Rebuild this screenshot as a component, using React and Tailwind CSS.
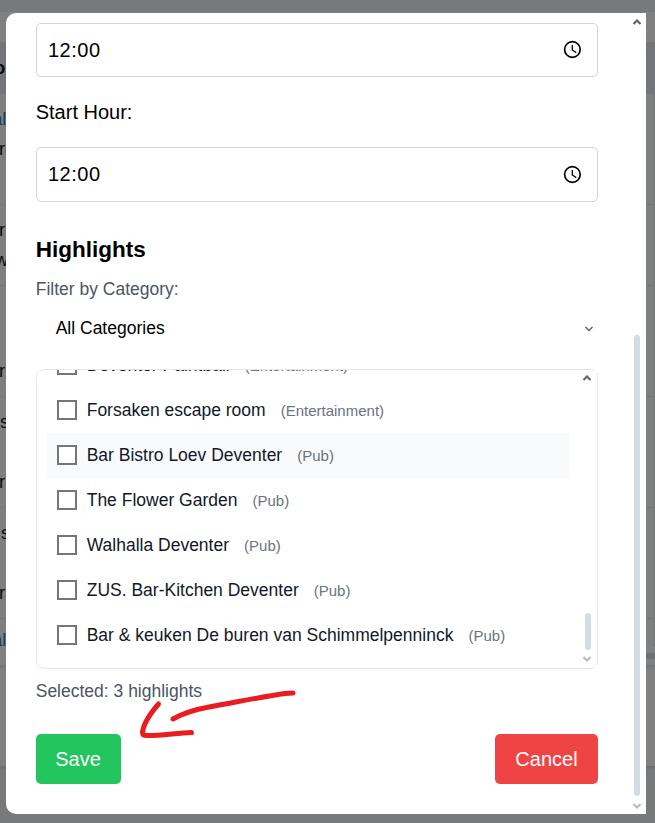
import React from "react";

const arial = "font-['Liberation_Sans',Arial,sans-serif]";

function Clock({ className }) {
  return (
    <svg width="20" height="20" viewBox="0 0 20 20" fill="none" stroke="#000" className={className}>
      <circle cx="10.400" cy="9.500" r="7.800" strokeWidth="1.700" />
      <path d="M10.300 5v5l4 2.600" strokeWidth="1.300" />
    </svg>
  );
}

function Chevron({ up, className, width = 1.8 }) {
  return (
    <svg width="10" height="6" viewBox="0 0 10 6" fill="none" stroke="currentColor" strokeWidth={width} className={className}>
      <path d={up ? "M1.500 5 5 1.500 8.500 5" : "M1.500 1 5 4.500 8.500 1"} />
    </svg>
  );
}

function TimeField({ className, iconClass }) {
  return (
    <div className={`flex items-center justify-between rounded-[5px] border border-[#d1d5db] pl-[11px] pr-[15px] ${className}`}>
      <span className="text-[20px] leading-[30px] tracking-[0.5px]">12:00</span>
      <Clock className={iconClass} />
    </div>
  );
}

const places = [
  ["Deventer Paintball", "Entertainment"],
  ["Forsaken escape room", "Entertainment"],
  ["Bar Bistro Loev Deventer", "Pub"],
  ["The Flower Garden", "Pub"],
  ["Walhalla Deventer", "Pub"],
  ["ZUS. Bar-Kitchen Deventer", "Pub"],
  ["Bar & keuken De buren van Schimmelpenninck", "Pub"],
];

function Place({ name, kind, active }) {
  return (
    <div className={`flex h-[45px] shrink-0 items-center pl-[10px] whitespace-nowrap ${active ? "bg-[#f9fafb]" : ""}`}>
      <span className="mb-px h-5 w-5 shrink-0 border-2 border-[#767676] bg-white" />
      <span className="ml-[9.7px] text-[17.5px] leading-[25px] text-[#111827]">{name}</span>
      <span className="ml-[15px] text-[15px] leading-5 text-[#6b7280]">({kind})</span>
    </div>
  );
}

function Backdrop() {
  return (
    <div className="flex h-full flex-col text-[18.5px] leading-[30px] text-[#0c0d12]">
      <div className="h-3 bg-[#78797b]" />
      <div className="h-[30px] bg-[#7f807f]" />
      <div className="h-[52px] bg-[#737578] pt-[11px]"><b className="-ml-[6px]">o</b></div>
      <div className="h-[111px] border-r border-b border-[#727473] bg-[#7d807e] pt-[10px]">
        <p className="-ml-[8px] text-[#163c5a]">al</p>
        <p className="-ml-px">r</p>
      </div>
      <div className="h-[81px] border-r border-b border-[#727473] bg-[#7d807e] pt-[10px]">
        <p className="-ml-px">r</p>
        <p className="-ml-[5px]">w</p>
      </div>
      <div className="h-[111px] border-r border-b border-[#727473] bg-[#7d807e] pt-[70px]"><p className="-ml-px">r</p></div>
      <div className="h-[111px] border-r border-b border-[#727473] bg-[#7d807e] pt-[10px]"><p>s</p><p className="mt-[30px] -ml-px">r</p></div>
      <div className="h-[111px] border-r border-b border-[#727473] bg-[#7d807e] pt-[10px]"><p className="ml-px">s</p><p className="mt-[30px] -ml-px">r</p></div>
      <div className="h-[28px] border-r border-[#727473] bg-[#7d807e] pt-[6px]"><p className="-ml-[8px] text-[#163c5a]">al</p></div>
      <div className="flex h-[18px] items-center justify-end bg-[#7f807f]">
        <div className="h-[6px] w-[10px] bg-[#697178]" />
      </div>
      <div className="h-[101px] bg-[#808080] bg-linear-to-b from-[#727374] from-0% to-[#808080] to-5%" />
      <div className="h-1 bg-linear-to-b from-[#6b6c6e] to-[#78797b]" />
      <div className="grow bg-[#78797b]" />
    </div>
  );
}

export default function App() {
  return (
    <div className={`relative h-[823px] w-[655px] overflow-hidden bg-[#78797b] ${arial}`}>
      <Backdrop />
      <div className="absolute top-[13px] left-[6px] flex h-[801px] w-[640px] rounded-l-[10px] bg-white text-black">
        <div className="flex w-[592px] flex-col pl-[30px]">
          <TimeField className="mt-[10px] h-[54px]" />
          <label className="mt-5 -ml-[0.3px] text-[20px] leading-[30px]">Start Hour:</label>
          <TimeField className="mt-5 h-[55px] pb-px" iconClass="mt-[2px]" />
          <h2 className="mt-[30px] -ml-[0.3px] text-[22.5px] leading-[35px] font-bold">Highlights</h2>
          <label className="mt-[10px] -ml-[0.3px] text-[17.5px] leading-[25px] text-[#4b5563]">Filter by Category:</label>
          <div className="mt-[14px] flex h-[25px] items-center justify-between pr-1 pl-[19.7px] text-[17.5px]">
            <span>All Categories</span>
            <Chevron className="text-[#666]" width={1.5} />
          </div>
          <div className="relative mt-[28px] flex h-[300px] justify-between rounded-[8px] border border-[#e5e7eb] pl-[10px]">
            <div className="flex h-[298px] w-[522px] flex-col justify-end overflow-hidden pb-[10px]">
              {places.map(([name, kind], i) => (
                <Place key={name} name={name} kind={kind} active={i === 2} />
              ))}
            </div>
            <div className="flex w-[13px] flex-col items-start pt-[5px] pb-[6px]">
              <Chevron up className="-ml-[2px] shrink-0 text-[#666]" width={2.2} />
              <span className="mt-auto mb-[6px] ml-px h-[37px] w-[6px] rounded-full bg-[#d1dce5]" />
              <Chevron className="-ml-[2px] shrink-0 text-[#bbb]" width={2.2} />
            </div>
            <span className="absolute -top-px -right-px h-[4px] w-[4px] bg-white" />
            <span className="absolute -right-px -bottom-px h-[4px] w-[4px] bg-white" />
          </div>
          <p className="mt-[10px] -ml-[0.3px] text-[17.5px] leading-[25px] text-[#4b5563]">Selected: 3 highlights</p>
          <div className="mt-[30px] flex h-[50px] justify-between text-[20px] text-white">
            <button className="w-[85px] rounded-[5px] bg-[#22c55e] pr-px">Save</button>
            <button className="w-[103px] rounded-[5px] bg-[#ef4444]">Cancel</button>
          </div>
        </div>
        <div className="ml-auto flex w-[14px] flex-col items-start pt-[6px] pb-[5px]">
          <Chevron up className="shrink-0 text-[#666]" width={2.2} />
          <span className="mt-auto mb-[7px] ml-[2px] h-[461px] w-[6px] rounded-full bg-[#d1dce5]" />
          <Chevron className="shrink-0 text-[#bbb]" width={2.2} />
        </div>
      </div>
      <svg className="absolute top-[680px] left-[130px]" width="180" height="70" viewBox="130 680 180 70" fill="none" stroke="#e91d1f" strokeWidth="5" strokeLinecap="round" strokeLinejoin="round">
        <path d="M158.500 704C149 715 143 724 142.500 733Q143 736 148 735.500C162 735.500 177 733 191.500 732.500" />
        <path d="M173 719Q187 711 209 707C237 702 266 696 285 693.500L293 693" />
      </svg>
    </div>
  );
}
